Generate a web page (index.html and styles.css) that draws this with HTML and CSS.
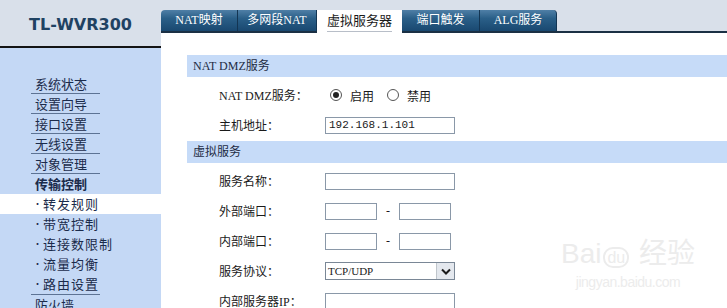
FILE: index.html
```html
<!DOCTYPE html>
<html lang="zh-CN">
<head>
    <meta charset="UTF-8">
    <title>TL-WVR300 虚拟服务器</title>
    <link rel="stylesheet" href="styles.css">
</head>
<body>
    <div class="page">
        <div class="sidebar">
            <div class="logo">TL-WVR300</div>
            <ul class="menu">
                <li class="item">系统状态</li>
                <li class="item">设置向导</li>
                <li class="item">接口设置</li>
                <li class="item">无线设置</li>
                <li class="item">对象管理</li>
                <li class="item group">传输控制</li>
                <li class="sub-list">
                    <ul>
                        <li class="sub current"><span class="dot">•</span>转发规则</li>
                        <li class="sub"><span class="dot">•</span>带宽控制</li>
                        <li class="sub"><span class="dot">•</span>连接数限制</li>
                        <li class="sub"><span class="dot">•</span>流量均衡</li>
                        <li class="sub"><span class="dot">•</span>路由设置</li>
                    </ul>
                </li>
                <li class="item">防火墙</li>
            </ul>
        </div>

        <div class="main">
            <div class="tabbar">
                <div class="tab first">NAT映射</div>
                <div class="tab">多网段NAT</div>
                <div class="tab active"><span>虚拟服务器</span></div>
                <div class="tab">端口触发</div>
                <div class="tab last">ALG服务</div>
            </div>

            <div class="content">
                <div class="section-title">NAT DMZ服务</div>
                <div class="rows">
                    <div class="row">
                        <span class="label">NAT DMZ服务：</span>
                        <span class="radio checked"></span><span class="radio-text">启用</span>
                        <span class="radio"></span><span class="radio-text">禁用</span>
                    </div>
                    <div class="row">
                        <span class="label">主机地址：</span>
                        <span class="field value">192.168.1.101</span>
                    </div>
                </div>

                <div class="section-title">虚拟服务</div>
                <div class="rows">
                    <div class="row">
                        <span class="label">服务名称：</span>
                        <span class="field"></span>
                    </div>
                    <div class="row">
                        <span class="label">外部端口：</span>
                        <span class="field short"></span>
                        <span class="dash">-</span>
                        <span class="field short"></span>
                    </div>
                    <div class="row">
                        <span class="label">内部端口：</span>
                        <span class="field short"></span>
                        <span class="dash">-</span>
                        <span class="field short"></span>
                    </div>
                    <div class="row">
                        <span class="label">服务协议：</span>
                        <span class="select">
                            <span class="select-text">TCP/UDP</span>
                            <span class="select-btn">
                                <svg width="10" height="7" viewBox="0 0 10 7"><path d="M1 1.5 L5 5.5 L9 1.5" fill="none" stroke="#1a1a1a" stroke-width="2"/></svg>
                            </span>
                        </span>
                    </div>
                    <div class="row">
                        <span class="label">内部服务器IP：</span>
                        <span class="field"></span>
                    </div>
                </div>
            </div>

            <div class="watermark">
                <div class="wm-logo">Bai<span class="wm-du">du</span> 经验</div>
                <div class="wm-url">jingyan.baidu.com</div>
            </div>
        </div>
    </div>
</body>
</html>
```

FILE: styles.css
```css
body {
    margin: 0;
    font-family: "Liberation Serif", "Noto Sans CJK SC", serif;
    color: #1c2a40;
    background-color: #fff;
}

ul {
    list-style: none;
    margin: 0;
    padding: 0;
}

.page {
    display: flex;
    width: 727px;
    height: 308px;
    overflow: hidden;
}

/* left navigation */
.sidebar {
    width: 161px;
    flex: none;
    background-color: #c4d8f5;
}

.logo {
    height: 48px;
    display: flex;
    align-items: center;
    justify-content: center;
    background-color: #d9e0ea;
    border-bottom: 2px solid #141414;
    font-family: "DejaVu Sans", sans-serif;
    font-weight: bold;
    font-size: 16px;
    color: #1f4262;
    padding-top: 3px;
    box-sizing: border-box;
}

.menu {
    padding-top: 26px;
    font-family: "Noto Sans CJK SC", sans-serif;
    font-size: 13px;
    color: #1b2b4b;
}

.item {
    height: 20px;
    line-height: 20px;
    margin-left: 31px;
    width: 69px;
    padding-left: 4px;
    box-sizing: border-box;
    border-bottom: 1px solid #5d7394;
}

.item.group {
    font-weight: bold;
    border-bottom: none;
}

.sub-list {
    border-bottom: 1px solid #5d7394;
    margin-left: 31px;
    width: 69px;
}

.sub-list ul {
    margin-left: -31px;
    width: 161px;
}

.sub {
    height: 20px;
    line-height: 20px;
    padding-left: 33px;
    letter-spacing: 1px;
    display: flex;
    align-items: center;
}

.dot {
    width: 10px;
    font-size: 9px;
    letter-spacing: 0;
}

.sub.current {
    background-color: #fff;
}

/* right side */
.main {
    flex: 1;
    position: relative;
}

.tabbar {
    height: 33px;
    box-sizing: border-box;
    padding-top: 10px;
    display: flex;
    background-color: #d9e0ea;
    border-bottom: 2px solid #1b3044;
}

.tab {
    height: 21px;
    line-height: 21px;
    width: 77px;
    text-align: center;
    font-family: "Liberation Serif", "Noto Sans CJK SC", serif;
    font-size: 12px;
    color: #fff;
    background: linear-gradient(#4f7fa6, #2a5f88 40%, #194870);
    border-right: 1px solid #133553;
}

.tab:nth-child(2) {
    width: 78px;
}

.tab.first {
    width: 76px;
    border-top-left-radius: 4px;
}

.tab.last {
    width: 76px;
    border-top-right-radius: 4px;
}

.tab.active {
    width: 85px;
    height: 23px;
    background: #fff;
    color: #1a1a1a;
    font-size: 13px;
    border-right: none;
}

.tab.active span {
    display: inline-block;
    line-height: 20px;
    border-bottom: 1px solid #b8bec8;
}

.content {
    padding: 22px 0 0 26px;
}

.section-title {
    height: 22px;
    line-height: 22px;
    padding-left: 6px;
    background-color: #c6dbf8;
    font-size: 12px;
    color: #1e2c44;
}

.rows {
    padding: 3px 0 1px 32px;
}

.row {
    height: 30px;
    display: flex;
    align-items: center;
    font-size: 12px;
    color: #1a1a1a;
}

.label {
    width: 106px;
    flex: none;
}

.field {
    width: 130px;
    height: 17px;
    box-sizing: border-box;
    border: 1px solid #8a98a8;
    background-color: #fff;
}

.field.short {
    width: 52px;
}

.value {
    font-family: "Liberation Mono", monospace;
    font-size: 11px;
    line-height: 15px;
    padding-left: 3px;
}

.dash {
    width: 22px;
    text-align: center;
}

.radio {
    width: 12px;
    height: 12px;
    box-sizing: border-box;
    border: 1px solid #555;
    border-radius: 50%;
    margin-left: 5px;
    display: flex;
    align-items: center;
    justify-content: center;
    background-color: #fff;
}

.radio.checked::after {
    content: "";
    width: 6px;
    height: 6px;
    border-radius: 50%;
    background-color: #222;
}

.radio + .radio-text {
    margin-left: 8px;
    margin-right: 8px;
    font-family: "Noto Sans CJK SC", sans-serif;
    font-size: 12px;
}

.select {
    width: 130px;
    height: 18px;
    box-sizing: border-box;
    border: 1px solid #7a8796;
    display: flex;
    background-color: #fff;
}

.select-text {
    flex: 1;
    line-height: 16px;
    padding-left: 2px;
    font-size: 11px;
}

.select-btn {
    width: 17px;
    border-left: 1px solid #c0c6cc;
    background-color: #e4e8ee;
    display: flex;
    align-items: center;
    justify-content: center;
}

.watermark {
    position: absolute;
    left: 400px;
    top: 238px;
    color: #ececec;
    font-family: "Liberation Sans", "Noto Sans CJK SC", sans-serif;
    text-align: center;
}

.wm-logo {
    font-size: 28px;
    line-height: 32px;
}

.wm-du {
    font-size: 16px;
    border: 2px solid #ececec;
    border-radius: 10px;
    padding: 0 2px;
    margin: 0 2px;
}

.wm-url {
    font-size: 14px;
    letter-spacing: -0.5px;
}
```
